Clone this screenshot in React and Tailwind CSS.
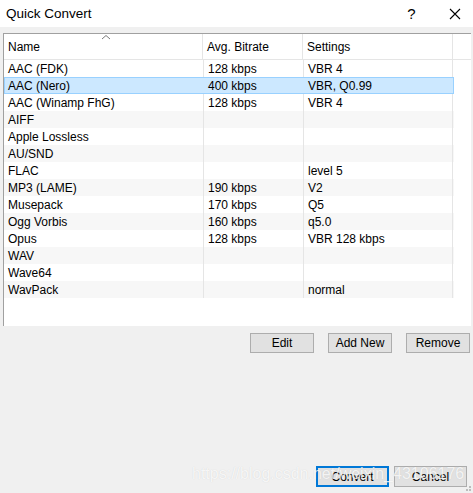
import React from "react";

const rows = [
  ["AAC (FDK)", "128 kbps", "VBR 4"],
  ["AAC (Nero)", "400 kbps", "VBR, Q0.99"],
  ["AAC (Winamp FhG)", "128 kbps", "VBR 4"],
  ["AIFF", "", ""],
  ["Apple Lossless", "", ""],
  ["AU/SND", "", ""],
  ["FLAC", "", "level 5"],
  ["MP3 (LAME)", "190 kbps", "V2"],
  ["Musepack", "170 kbps", "Q5"],
  ["Ogg Vorbis", "160 kbps", "q5.0"],
  ["Opus", "128 kbps", "VBR 128 kbps"],
  ["WAV", "", ""],
  ["Wave64", "", ""],
  ["WavPack", "", "normal"],
];

export default function App() {
  return (
    <div
      className="relative w-[473px] h-[493px] bg-[#f0f0f0] flex flex-col overflow-hidden text-black"
      style={{ fontFamily: '"Liberation Sans", Arial, sans-serif' }}
    >
      {/* Title bar */}
      <div className="h-[27px] bg-white flex items-center shrink-0">
        <div className="pl-[6px] text-[13.5px] leading-none flex-1">Quick Convert</div>
        <div className="w-[40px] text-[15px] leading-none text-center pl-[1px]">?</div>
        <div className="w-[6px]" />
        <div className="w-[36px] flex justify-center">
          <svg width="12" height="12" viewBox="0 0 12 12">
            <path d="M1 1 L11 11 M11 1 L1 11" stroke="#000" strokeWidth="1.1" fill="none" />
          </svg>
        </div>
      </div>

      {/* List box */}
      <div className="mt-[6px] ml-[3px] w-[468px] h-[293px] bg-white border-l border-t border-[#a0a0a0] flex flex-col shrink-0">
        {/* header */}
        <div className="relative flex h-[26px] border-b border-[#e5e5e5] text-[12px] shrink-0">
          <div className="w-[199px] pl-[4px] flex items-center border-r border-[#e5e5e5]">Name</div>
          <div className="w-[100px] pl-[4px] flex items-center border-r border-[#e5e5e5]">Avg. Bitrate</div>
          <div className="w-[150px] pl-[4px] flex items-center border-r border-[#e5e5e5]">Settings</div>
          <div className="flex-1" />
          <svg className="absolute left-[97px] top-[0px]" width="10" height="6" viewBox="0 0 10 6">
            <path d="M1 5 L5 1.5 L9 5" stroke="#7a7a7a" strokeWidth="1" fill="none" />
          </svg>
        </div>
        {/* rows */}
        <div className="flex flex-col">
          {rows.map((r, i) => {
            const sel = i === 1;
            const bg = sel
              ? "bg-[#cce8ff] outline outline-1 -outline-offset-1 outline-[#99d1ff]"
              : i % 2 === 1
              ? "bg-[#f7f7f7]"
              : "bg-white";
            return (
              <div key={i} className="flex h-[17px] text-[12px] leading-none">
                <div className={"w-[450px] flex " + bg}>
                  <div className="w-[199px] pl-[4px] flex items-center">{r[0]}</div>
                  <div className={"w-[100px] pl-[4px] flex items-center border-l " + (sel ? "border-transparent" : "border-[#e5e5e5]")}>{r[1]}</div>
                  <div className={"w-[150px] pl-[4px] flex items-center border-l border-r " + (sel ? "border-transparent" : "border-[#e5e5e5]")}>{r[2]}</div>
                </div>
              </div>
            );
          })}
        </div>
      </div>

      {/* Edit / Add / Remove */}
      <div className="mt-[7px] flex justify-end gap-[14px] pr-[3px] shrink-0">
        <div className="w-[64px] h-[20px] flex items-center justify-center bg-[#e1e1e1] border border-[#adadad] text-[12px]">Edit</div>
        <div className="w-[64px] h-[20px] flex items-center justify-center bg-[#e1e1e1] border border-[#adadad] text-[12px]">Add New</div>
        <div className="w-[64px] h-[20px] flex items-center justify-center bg-[#e1e1e1] border border-[#adadad] text-[12px]">Remove</div>
      </div>

      <div className="flex-1" />

      {/* Convert / Cancel */}
      <div className="flex justify-end gap-[5px] pr-[6px] mb-[6px] shrink-0">
        <div className="w-[73px] h-[21px] flex items-center justify-center bg-[#e1e1e1] border-2 border-[#0078d7] text-[12px]">Convert</div>
        <div className="w-[73px] h-[21px] flex items-center justify-center bg-[#e1e1e1] border border-[#adadad] text-[12px]">Cancel</div>
      </div>

      {/* watermark */}
      <div
        className="absolute left-[192px] top-[462px] text-[16px] text-white/80 whitespace-nowrap pointer-events-none"
        style={{ fontFamily: '"Liberation Sans", Arial, sans-serif', textShadow: "0 0 1px rgba(0,0,0,0.15)" }}
      >
        https://blog.csdn.net/weixin_43106176
      </div>

      {/* size grip */}
      <svg className="absolute right-[1px] bottom-[1px]" width="10" height="10" viewBox="0 0 10 10">
        <rect x="7" y="7" width="2" height="2" fill="#bcbcbc" />
        <rect x="4" y="7" width="2" height="2" fill="#bcbcbc" />
        <rect x="7" y="4" width="2" height="2" fill="#bcbcbc" />
      </svg>
    </div>
  );
}
